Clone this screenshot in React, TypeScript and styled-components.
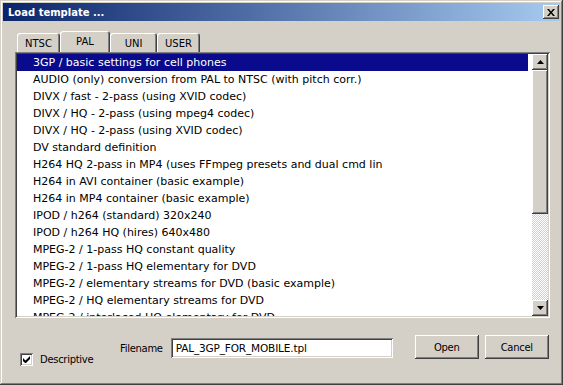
import { createGlobalStyle, styled } from 'styled-components';

const templates = [
    '3GP / basic settings for cell phones',
    'AUDIO (only) conversion from PAL to NTSC (with pitch corr.)',
    'DIVX / fast - 2-pass (using XVID codec)',
    'DIVX / HQ - 2-pass (using mpeg4 codec)',
    'DIVX / HQ - 2-pass (using XVID codec)',
    'DV standard definition',
    'H264 HQ 2-pass in MP4 (uses FFmpeg presets and dual cmd lin',
    'H264 in AVI container (basic example)',
    'H264 in MP4 container (basic example)',
    'IPOD / h264 (standard) 320x240',
    'IPOD / h264 HQ (hires) 640x480',
    'MPEG-2 / 1-pass HQ constant quality',
    'MPEG-2 / 1-pass HQ elementary for DVD',
    'MPEG-2 / elementary streams for DVD (basic example)',
    'MPEG-2 / HQ elementary streams for DVD',
    'MPEG-2 / interlaced HQ elementary for DVD',
];

const tabs = [
    { label: 'NTSC', width: 43 },
    { label: 'PAL', width: 50 },
    { label: 'UNI', width: 47 },
    { label: 'USER', width: 43 },
];

const App = () => {
    return (
        <>
            <GlobalStyle />
            <Window>
                <TitleBar>
                    <Title>Load template ...</Title>
                    <CloseButton>
                        <svg width="8" height="7" viewBox="0 0 8 7">
                            <path d="M0 0h2l2 2.5L6 0h2L5 3.5 8 7H6L4 4.5 2 7H0l3-3.5z" fill="#000" />
                        </svg>
                    </CloseButton>
                </TitleBar>
                <Body>
                    <TabStrip>
                        {tabs.map((t) => (
                            <Tab key={t.label} $w={t.width} $active={t.label === 'PAL'}>
                                {t.label}
                            </Tab>
                        ))}
                    </TabStrip>
                    <ListBox>
                        <Items>
                            {templates.map((name, i) => (
                                <Row key={name} $selected={i === 0}>
                                    {name}
                                </Row>
                            ))}
                        </Items>
                        <ScrollBar>
                            <ArrowButton>
                                <svg width="7" height="4" viewBox="0 0 7 4">
                                    <path d="M3.5 0L7 4H0z" fill="#000" />
                                </svg>
                            </ArrowButton>
                            <Thumb />
                            <Track />
                            <ArrowButton>
                                <svg width="7" height="4" viewBox="0 0 7 4">
                                    <path d="M0 0h7L3.5 4z" fill="#000" />
                                </svg>
                            </ArrowButton>
                        </ScrollBar>
                    </ListBox>
                    <BottomBar>
                        <CheckLabel>
                            <CheckBox>
                                <svg width="7" height="7" viewBox="0 0 7 7">
                                    <path d="M0 2v3l2 2h1l4-4V0L2.5 4.5z" fill="#000" />
                                </svg>
                            </CheckBox>
                            Descriptive
                        </CheckLabel>
                        <FilenameGroup>
                            <FieldLabel>Filename</FieldLabel>
                            <TextInput>PAL_3GP_FOR_MOBILE.tpl</TextInput>
                        </FilenameGroup>
                        <Buttons>
                            <Button>Open</Button>
                            <Button>Cancel</Button>
                        </Buttons>
                    </BottomBar>
                </Body>
            </Window>
        </>
    );
};

export default App;

const raised = `
    box-shadow: inset -1px -1px #404040, inset 1px 1px #ffffff,
        inset -2px -2px #808080, inset 2px 2px #d4d0c8;
`;

const sunken = `
    box-shadow: inset 1px 1px #808080, inset -1px -1px #ffffff,
        inset 2px 2px #404040, inset -2px -2px #d4d0c8;
`;

const GlobalStyle = createGlobalStyle`
    html, body {
        margin: 0;
        padding: 0;
        background: #d4d0c8;
    }
    body {
        font-family: "DejaVu Sans", Tahoma, sans-serif;
        font-size: 10px;
        letter-spacing: -0.3px;
        color: #000;
    }
`;

const Window = styled.div`
    width: 563px;
    height: 385px;
    box-sizing: border-box;
    padding: 3px;
    display: flex;
    flex-direction: column;
    background: #d4d0c8;
    box-shadow: inset -1px -1px #404040, inset 1px 1px #d4d0c8,
        inset -2px -2px #808080, inset 2px 2px #ffffff;
`;

const TitleBar = styled.div`
    height: 18px;
    display: flex;
    align-items: center;
    padding: 0 1px 0 5px;
    background: linear-gradient(to right, #0a246a, #a6caf0);
`;

const Title = styled.div`
    color: #fff;
    font-weight: bold;
    letter-spacing: 0;
`;

const CloseButton = styled.div`
    margin-left: auto;
    width: 16px;
    height: 14px;
    display: flex;
    align-items: center;
    justify-content: center;
    background: #d4d0c8;
    ${raised}
`;

const Body = styled.div`
    flex: 1;
    display: flex;
    flex-direction: column;
    padding: 10px 10px 0 12px;
`;

const TabStrip = styled.div`
    height: 21px;
    display: flex;
    align-items: flex-end;
    padding-left: 2px;
`;

const Tab = styled.div<{ $w: number; $active?: boolean }>`
    width: ${(p) => p.$w}px;
    height: ${(p) => (p.$active ? 21 : 19)}px;
    box-sizing: border-box;
    display: flex;
    align-items: center;
    justify-content: center;
    padding-top: ${(p) => (p.$active ? 0 : 1)}px;
    letter-spacing: 0;
    border-radius: 3px 3px 0 0;
    background: #d4d0c8;
    box-shadow: inset 1px 1px #ffffff, inset -1px 0 #404040, inset -2px 0 #808080;
`;

const ListBox = styled.div`
    height: 266px;
    box-sizing: border-box;
    padding: 2px;
    display: flex;
    background: #fff;
    ${sunken}
`;

const Items = styled.div`
    flex: 1;
    overflow: hidden;
    min-width: 0;
`;

const Row = styled.div<{ $selected?: boolean }>`
    height: 17px;
    line-height: 17px;
    padding-left: 16px;
    margin-right: 4px;
    font-size: 11px;
    letter-spacing: 0;
    white-space: nowrap;
    overflow: hidden;
    background: ${(p) => (p.$selected ? '#0a0a8c' : 'transparent')};
    color: ${(p) => (p.$selected ? '#fff' : '#000')};
`;

const ScrollBar = styled.div`
    width: 16px;
    display: flex;
    flex-direction: column;
`;

const ArrowButton = styled.div`
    height: 16px;
    display: flex;
    align-items: center;
    justify-content: center;
    background: #d4d0c8;
    ${raised}
`;

const Thumb = styled.div`
    height: 144px;
    background: #d4d0c8;
    ${raised}
`;

const Track = styled.div`
    flex: 1;
    background: repeating-conic-gradient(#d4d0c8 0 25%, #ffffff 0 50%) 0 0 / 2px 2px;
`;

const BottomBar = styled.div`
    display: flex;
    align-items: flex-start;
    padding: 17px 0 0 5px;
`;

const CheckLabel = styled.div`
    width: 100px;
    margin-top: 18px;
    display: flex;
    align-items: center;
    gap: 7px;
`;

const CheckBox = styled.div`
    width: 13px;
    height: 13px;
    box-sizing: border-box;
    display: flex;
    align-items: center;
    justify-content: center;
    background: #fff;
    ${sunken}
`;

const FilenameGroup = styled.div`
    margin-top: 3px;
    display: flex;
    align-items: center;
    gap: 8px;
`;

const FieldLabel = styled.div``;

const TextInput = styled.div`
    width: 222px;
    height: 20px;
    box-sizing: border-box;
    padding-left: 5px;
    display: flex;
    align-items: center;
    font-size: 10.5px;
    letter-spacing: -0.15px;
    background: #fff;
    ${sunken}
`;

const Buttons = styled.div`
    margin-left: 22px;
    display: flex;
    gap: 6px;
`;

const Button = styled.div`
    width: 64px;
    height: 24px;
    display: flex;
    align-items: center;
    justify-content: center;
    background: #d4d0c8;
    box-shadow: inset -1px -1px #404040, inset 1px 1px #ffffff, inset -2px -2px #808080;
`;
